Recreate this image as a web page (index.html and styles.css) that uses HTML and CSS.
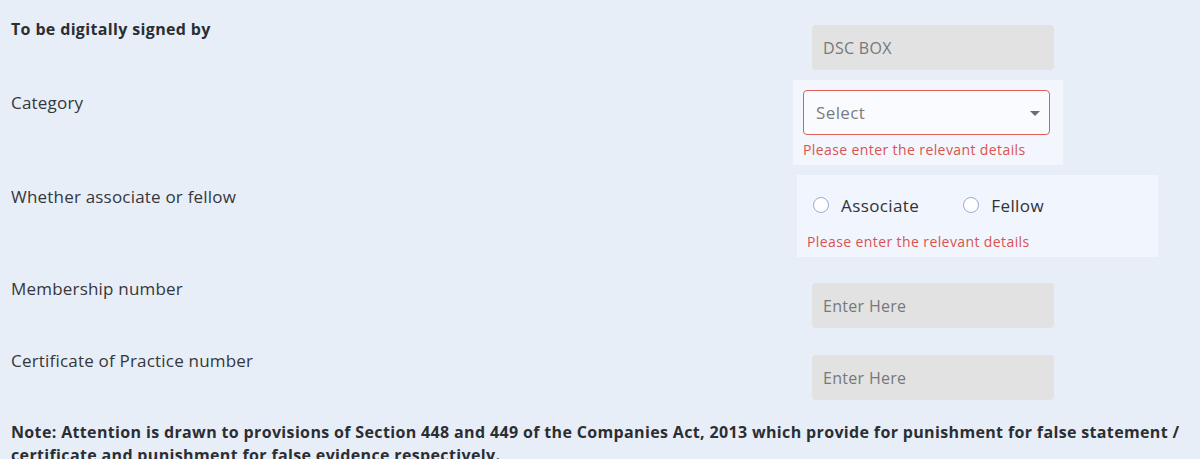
FILE: index.html
```html
<!DOCTYPE html>
<html lang="en">
<head>
<meta charset="utf-8">
<title>Signatory details</title>
<link rel="stylesheet" href="styles.css">
</head>
<body>
<div class="page">
  <div class="row row-1">
    <div class="label label-bold lbl-1">To be digitally signed by</div>
    <div class="field field-input fld-1"><span class="placeholder">DSC BOX</span></div>
  </div>

  <div class="row row-2">
    <div class="label lbl-2">Category</div>
    <div class="panel panel-select">
      <div class="select">
        <span class="placeholder placeholder-lg">Select</span>
        <span class="caret"></span>
      </div>
      <div class="error err-select">Please enter the relevant details</div>
    </div>
  </div>

  <div class="row row-3">
    <div class="label lbl-3">Whether associate or fellow</div>
    <div class="panel panel-radio">
      <div class="radios">
        <label class="radio"><span class="dot"></span><span class="radio-text">Associate</span></label>
        <label class="radio"><span class="dot"></span><span class="radio-text">Fellow</span></label>
      </div>
      <div class="error err-radio">Please enter the relevant details</div>
    </div>
  </div>

  <div class="row row-4">
    <div class="label">Membership number</div>
    <div class="field field-input fld-4"><span class="placeholder">Enter Here</span></div>
  </div>

  <div class="row row-5">
    <div class="label">Certificate of Practice number</div>
    <div class="field field-input fld-4"><span class="placeholder">Enter Here</span></div>
  </div>

  <p class="note">Note: Attention is drawn to provisions of Section 448 and 449 of the Companies Act, 2013 which provide for punishment for false statement / certificate and punishment for false evidence respectively.</p>
</div>
</body>
</html>
```

FILE: styles.css
```css
html, body {
  margin: 0;
  padding: 0;
  background: #e8eef8;
}
body {
  font-family: "Open Sans", "DejaVu Sans", sans-serif;
  color: #2f3236;
  overflow: hidden;
}
.page {
  padding: 17px 0 0 11px;
  width: 1189px;
}
.row {
  display: flex;
  align-items: flex-start;
}
.label {
  width: 782px;
  flex: none;
  font-size: 17px;
  line-height: 24px;
  letter-spacing: 0.2px;
  color: #34373b;
}
.label-bold {
  font-size: 16px;
  font-weight: 700;
  letter-spacing: 0.35px;
  color: #2b2e33;
}
.lbl-1 { margin-top: 0; }
.lbl-2 { margin-top: 11px; }
.lbl-3 { margin-top: 10px; }

.field-input {
  width: 242px;
  height: 45px;
  background: #e2e2e2;
  border-radius: 4px;
  box-sizing: border-box;
  padding: 0 11px;
  display: flex;
  align-items: center;
  margin-left: 19px;
}
.fld-1 { margin-top: 8px; }
.fld-4 { margin-top: 6px; }

.placeholder {
  font-size: 16px;
  letter-spacing: 0.3px;
  color: #76787b;
}
.placeholder-lg {
  font-size: 17px;
  letter-spacing: 0.4px;
  color: #7a7c80;
}

.row-2 { margin-top: 10px; }
.panel-select {
  background: #f3f6fd;
  width: 270px;
  box-sizing: border-box;
  padding: 10px 13px 5px 10px;
}
.select {
  height: 45px;
  box-sizing: border-box;
  border: 1px solid #dc5f5a;
  border-radius: 4px;
  background: #fafbfe;
  display: flex;
  align-items: center;
  justify-content: space-between;
  padding: 0 9px 0 12px;
}
.caret {
  width: 0;
  height: 0;
  border-left: 5px solid transparent;
  border-right: 5px solid transparent;
  border-top: 5px solid #6b6d70;
  margin-top: 1px;
}
.error {
  font-size: 14px;
  line-height: 20px;
  letter-spacing: 0.4px;
  color: #d9534f;
}
.err-select { margin-top: 5px; }

.row-3 { margin-top: 10px; }
.panel-radio {
  background: #f1f5fd;
  width: 361px;
  margin-left: 4px;
  box-sizing: border-box;
  padding: 18px 10px 5px 10px;
}
.radios {
  display: flex;
  align-items: center;
  height: 24px;
}
.radio {
  display: flex;
  align-items: center;
  margin-left: 6px;
}
.radio + .radio {
  margin-left: 44px;
}
.dot {
  width: 16px;
  height: 16px;
  box-sizing: border-box;
  border: 1px solid #95acd3;
  border-radius: 50%;
  background: #ffffff;
}
.radio-text {
  margin-left: 12px;
  font-size: 17px;
  letter-spacing: 0.4px;
  color: #2f3236;
}
.err-radio { margin-top: 15px; }

.row-4 { margin-top: 20px; }
.row-5 { margin-top: 21px; }

.note {
  margin: 21px 0 0 0;
  font-size: 16px;
  line-height: 23px;
  font-weight: 700;
  letter-spacing: 0.35px;
  color: #2b2e33;
  width: 1189px;
}
```
